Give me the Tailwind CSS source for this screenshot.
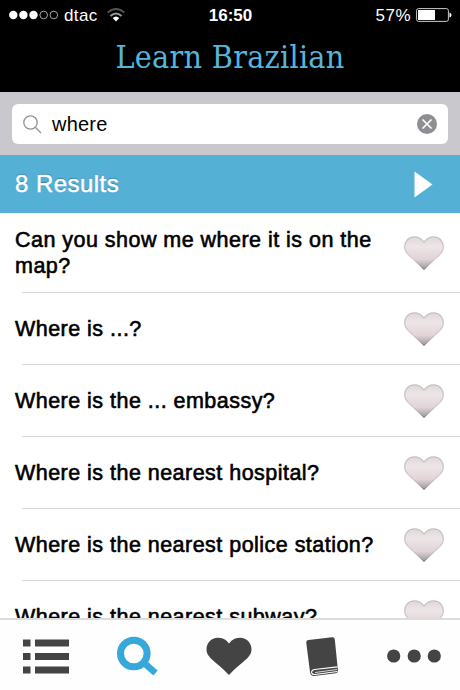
<!DOCTYPE html>
<html lang="en">
<head>
  <meta charset="UTF-8" />
  <meta name="viewport" content="width=device-width, initial-scale=1.0"/>
  <title>Learn Brazilian</title>
  <script src="https://cdn.jsdelivr.net/npm/@tailwindcss/browser@4"></script>
</head>
<body class="h-[690px] w-[460px] overflow-hidden bg-white font-['Liberation_Sans',Arial,sans-serif] text-black antialiased">
  <div class="relative flex h-full flex-col overflow-hidden">

    <!-- Header -->
    <header class="h-[92px] shrink-0 bg-black text-white">
      <div class="grid h-[30px] grid-cols-3 items-center pl-[9px] pr-2">
        <div class="flex items-center">
          <svg class="h-[10px] w-[50px]" viewBox="0 0 50 10" fill="#fff">
            <circle cx="4.3" cy="5" r="4.2"/>
            <circle cx="14.4" cy="5" r="4.2"/>
            <circle cx="24.5" cy="5" r="4.2"/>
            <circle cx="34.7" cy="5" r="3.8" fill="none" stroke="#ccc" stroke-width=".8"/>
            <circle cx="44.8" cy="5" r="3.8" fill="none" stroke="#ccc" stroke-width=".8"/>
          </svg>
          <span class="ml-[5px] text-[17px] leading-none tracking-[0.4px]">dtac</span>
          <svg class="ml-[9px] h-[14px] w-[18px]" viewBox="0 0 18 14" fill="none" stroke-width="2">
            <path d="M.7 4.500Q9-2.500 17.300 4.500" stroke="#555"/>
            <path d="M3.500 8Q9 3 14.500 8" stroke="#999"/>
            <path d="M5.700 10Q9 7 12.300 10L9 13.500Z" fill="#fff"/>
          </svg>
        </div>
        <span class="text-center text-[17px] font-bold leading-none">16:50</span>
        <div class="flex items-center justify-end">
          <span class="mr-[5px] text-[17px] leading-none tracking-[0.5px]">57%</span>
          <svg class="h-[14px] w-9" viewBox="0 0 36 14">
            <rect x=".6" y=".6" width="31.800" height="12.800" rx="2" fill="none" stroke="#ccc"/>
            <path d="M2 2H19V12H2Z M33.500 4.500Q35.500 5 35.500 7T33.500 9.500Z" fill="#fff"/>
          </svg>
        </div>
      </div>
      <h1 class="mt-[8px] text-center font-['DejaVu_Serif',serif] text-[32px] leading-[38px] tracking-[0.25px] whitespace-nowrap text-[#55b5da] [font-stretch:condensed]">Learn Brazilian</h1>
    </header>

    <!-- Search -->
    <div class="h-[63px] shrink-0 bg-[#c9c8cd] px-3 pt-3">
      <div class="flex h-10 items-center rounded-[6px] bg-white pl-[11px] pr-[11px]">
        <svg class="size-[19px]" viewBox="0 0 19 19" fill="none" stroke="#929296" stroke-width="1.3">
          <circle cx="7.500" cy="7.500" r="6.700"/>
          <path d="M12.300 12.300L18 18"/>
        </svg>
        <span class="ml-[10px] grow text-[20px] leading-none tracking-[0.2px]">where</span>
        <svg class="size-5" viewBox="0 0 20 20">
          <circle cx="10" cy="10" r="10" fill="#8e8e93"/>
          <path d="M5.500 5.500L14.500 14.500M14.500 5.500L5.500 14.500" stroke="#fff" stroke-width="1.700"/>
        </svg>
      </div>
    </div>

    <!-- Result count -->
    <div class="flex h-[58px] shrink-0 items-center justify-between bg-[#54b0d5] pl-[15px] pr-[27px] text-white">
      <h2 class="text-[24px] leading-none tracking-[0.45px] [-webkit-text-stroke:0.5px_#fff] [text-shadow:0_-1px_1px_#2f7898]">8 Results</h2>
      <svg class="h-[27px] w-[19px]" viewBox="0 0 19 27"><path d="M.5 .5L18.500 13.500L.5 26.500Z" fill="#fff"/></svg>
    </div>

    <!-- Phrases -->
    <svg class="absolute size-0">
      <defs>
        <linearGradient id="heart-fill" x1="0" y1="0" x2="0" y2="1">
          <stop offset="0" stop-color="#e0d8da"/>
          <stop offset=".3" stop-color="#eee5e7"/>
          <stop offset=".7" stop-color="#dfd3d6"/>
          <stop offset="1" stop-color="#a09a9c"/>
        </linearGradient>
        <linearGradient id="heart-line" x1="0" y1="0" x2="0" y2="1">
          <stop offset="0" stop-color="#c6c2c4"/>
          <stop offset=".7" stop-color="#d6cbce"/>
          <stop offset="1" stop-color="#8d878a"/>
        </linearGradient>
        <symbol id="heart" viewBox="0 0 40 34">
          <path d="M20 6.200C22.500 2.500 26 .8 29.500 .8C35.500 .8 39.300 5.300 39.300 11C39.300 19 30 22 20 33.200C10 22 .7 19 .7 11C.7 5.300 4.500 .8 10.500 .8C14 .8 17.500 2.500 20 6.200Z" fill="url(#heart-fill)" stroke="url(#heart-line)" stroke-width="1.300"/>
        </symbol>
      </defs>
    </svg>
    <ul class="text-[21.5px] leading-[26px] tracking-[0.47px] [-webkit-text-stroke:0.6px_#000]">
      <li class="relative flex h-20 items-center justify-between pl-[15px] pr-4 after:absolute after:bottom-0 after:left-[22px] after:right-0 after:h-px after:bg-[#d9d9d9]">
        <span class="w-[375px]">Can you show me where it is on the<br>map?</span>
        <svg class="h-[34px] w-10 shrink-0"><use href="#heart"/></svg>
      </li>
      <li class="relative flex h-[72px] items-center justify-between pl-[15px] pr-4 after:absolute after:bottom-0 after:left-[22px] after:right-0 after:h-px after:bg-[#d9d9d9]">
        <span>Where is ...?</span>
        <svg class="h-[34px] w-10 shrink-0"><use href="#heart"/></svg>
      </li>
      <li class="relative flex h-[72px] items-center justify-between pl-[15px] pr-4 after:absolute after:bottom-0 after:left-[22px] after:right-0 after:h-px after:bg-[#d9d9d9]">
        <span>Where is the ... embassy?</span>
        <svg class="h-[34px] w-10 shrink-0"><use href="#heart"/></svg>
      </li>
      <li class="relative flex h-[72px] items-center justify-between pl-[15px] pr-4 after:absolute after:bottom-0 after:left-[22px] after:right-0 after:h-px after:bg-[#d9d9d9]">
        <span>Where is the nearest hospital?</span>
        <svg class="h-[34px] w-10 shrink-0"><use href="#heart"/></svg>
      </li>
      <li class="relative flex h-[72px] items-center justify-between pl-[15px] pr-4 after:absolute after:bottom-0 after:left-[22px] after:right-0 after:h-px after:bg-[#d9d9d9]">
        <span>Where is the nearest police station?</span>
        <svg class="h-[34px] w-10 shrink-0"><use href="#heart"/></svg>
      </li>
      <li class="relative flex h-[72px] items-center justify-between pl-[15px] pr-4">
        <span>Where is the nearest subway?</span>
        <svg class="h-[34px] w-10 shrink-0"><use href="#heart"/></svg>
      </li>
    </ul>

    <!-- Tab bar -->
    <nav class="absolute inset-x-0 bottom-0 grid h-[72px] grid-cols-5 justify-items-center border-t-2 border-[#dcdcdc] bg-[#fefefe] pt-4 text-[#444]">
      <svg class="mt-[3px] h-[35px] w-[46px]" viewBox="0 0 46 35" fill="currentColor">
        <path d="M0 .5H7.500V7.500H0Z M12 .5H46V7.500H12Z M0 14H7.500V21H0Z M12 14H46V21H12Z M0 27.500H7.500V34.500H0Z M12 27.500H46V34.500H12Z"/>
      </svg>
      <svg class="mr-[2px] h-10 w-[41px]" viewBox="0 0 41 40" fill="none" stroke="#36a8db">
        <circle cx="16.800" cy="17.500" r="13.300" stroke-width="7"/>
        <path d="M26 26L38.500 37" stroke-width="6.500"/>
      </svg>
      <svg class="mr-[2px] mt-px h-[39px] w-[46px]" viewBox="0 0 46 39" fill="currentColor">
        <path d="M23 6.500C26 2.500 30 .8 34 .8C41 .8 45.500 6 45.500 12.500C45.500 21 35 25 23 38C11 25 .5 21 .5 12.500C.5 6 5 .8 12 .8C16 .8 20 2.500 23 6.500Z"/>
      </svg>
      <svg class="mt-px h-[39px] w-8" viewBox="0 0 32 39" fill="currentColor">
        <path d="M2.500 3L26 .3Q28.500 0 28.800 2.500L32 34Q32 36 30 36.300L8 39Q4.500 39 4 35L.3 6Q0 3.300 2.500 3Z"/>
        <path d="M31.500 29.800L8.500 32.500Q5 33.300 5.700 36Q6.300 37.700 9 37.500L31.500 34.500" fill="none" stroke="#fff" stroke-width="1.200"/>
        <path d="M9 35.500L31 32.500" stroke="#fff" stroke-width=".8"/>
      </svg>
      <svg class="mt-[13px] h-[14px] w-[54px]" viewBox="0 0 54 14" fill="currentColor">
        <circle cx="6.700" cy="7" r="6.600"/>
        <circle cx="27.200" cy="7" r="6.600"/>
        <circle cx="47.300" cy="7" r="6.600"/>
      </svg>
    </nav>
  </div>
</body>
</html>
